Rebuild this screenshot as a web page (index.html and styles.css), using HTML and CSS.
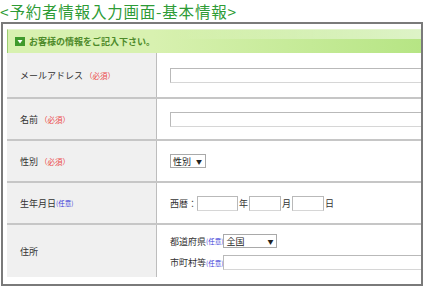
FILE: index.html
```html
<!DOCTYPE html>
<html lang="ja">
  <head>
    <meta charset="UTF-8" />
    <title>予約者情報入力画面-基本情報</title>
    <link rel="stylesheet" href="styles.css">
  </head>
  <body>
    <h1 class="page-title">&lt;予約者情報入力画面-基本情報&gt;</h1>

    <div class="form-frame">
      <div class="form-head">
        <svg class="head-icon" width="10" height="9" viewBox="0 0 10 9">
          <rect width="10" height="9" fill="#3f9a2c" />
          <path d="M2.5 3 L7.5 3 L5 6.5 Z" fill="#fff" />
        </svg>
        お客様の情報をご記入下さい。
      </div>

      <div class="form-table">
        <div class="row row-first">
          <div class="label">メールアドレス<span class="req">（必須）</span></div>
          <div class="field"><input class="text wide" type="text" /></div>
        </div>
        <div class="row">
          <div class="label">名前<span class="req">（必須）</span></div>
          <div class="field"><input class="text wide" type="text" /></div>
        </div>
        <div class="row">
          <div class="label">性別<span class="req">（必須）</span></div>
          <div class="field">
            <span class="select sex">性別<span class="arrow">▼</span></span>
          </div>
        </div>
        <div class="row">
          <div class="label">生年月日<span class="opt">(任意)</span></div>
          <div class="field birth">
            西暦：<input class="text year" type="text" />年<input class="text mon" type="text" />月<input class="text mon" type="text" />日
          </div>
        </div>
        <div class="row row-last">
          <div class="label">住所</div>
          <div class="field address">
            <div class="addr-line">
              都道府県<span class="opt">(任意)</span><span class="select pref">全国<span class="arrow">▼</span></span>
            </div>
            <div class="addr-line">
              市町村等<span class="opt">(任意)</span><input class="text wide" type="text" />
            </div>
          </div>
        </div>
      </div>
    </div>
  </body>
</html>
```

FILE: styles.css
```css
body {
  margin: 0;
  background: #fff;
  font-family: "Noto Sans CJK JP", "Liberation Sans", sans-serif;
  color: #333;
}

.page-title {
  margin: 0;
  height: 22px;
  font-size: 15.5px;
  line-height: 22px;
  font-weight: normal;
  letter-spacing: 0.8px;
  color: #2e9b36;
}

/* outer box */
.form-frame {
  margin-left: 1px;
  width: 414px;
  border: 2px solid #7a7a7a;
  padding: 5px 0 7px 4px;
  overflow: hidden;
}

.form-head {
  display: flex;
  align-items: center;
  gap: 4px;
  height: 23px;
  padding-left: 7px;
  border-left: 1px solid #9ccc72;
  border-top: 1px solid #e4f5cf;
  background:
    linear-gradient(to right, rgba(255, 255, 255, 0) 40%, rgba(255, 255, 255, 0.55)) top / 100% 9px no-repeat,
    linear-gradient(to right, #d8f1b0 35%, #b6e584);
  font-size: 9px;
  font-weight: bold;
  color: #4d8a2a;
  white-space: nowrap;
}

.head-icon {
  flex: none;
}

.form-table {
  width: 600px;
}

.row {
  display: flex;
  height: 40px;
  border-top: 2px solid #c6c6c6;
}

.row-first {
  height: 44px;
  border-top: none;
}

.row-last {
  height: 52px;
}

.label {
  width: 150px;
  flex: none;
  display: flex;
  align-items: center;
  padding-left: 13px;
  box-sizing: border-box;
  background: #f0f0f0;
  border-right: 1px solid #bdbdbd;
  font-size: 9px;
  white-space: nowrap;
}

.req {
  color: #ec4a4a;
  font-size: 7.5px;
  margin-left: 2px;
}

.opt {
  color: #3a3ad8;
  font-size: 6.5px;
}

.field {
  flex: 1;
  display: flex;
  align-items: center;
  padding-left: 13px;
  font-size: 9px;
  white-space: nowrap;
}

.text {
  box-sizing: border-box;
  height: 15px;
  margin: 0;
  padding: 0;
  border: 1px solid #b9b9b9;
  border-bottom-color: #d6d6d6;
  background: #fff;
}

.wide {
  width: 420px;
}

.year {
  width: 41px;
}

.mon {
  width: 32px;
  margin-left: 1px;
}

.birth .text {
  margin-right: 1px;
}

.select {
  display: inline-flex;
  align-items: center;
  justify-content: space-between;
  box-sizing: border-box;
  height: 14px;
  padding: 0 3px 0 2px;
  border: 1px solid #a9a9a9;
  background: #fff;
  font-size: 9px;
  color: #222;
}

.arrow {
  font-size: 6px;
}

.sex {
  width: 36px;
}

.pref {
  width: 54px;
}

.address {
  flex-direction: column;
  align-items: flex-start;
  justify-content: center;
  gap: 7px;
  padding-top: 2px;
}

.addr-line {
  display: flex;
  align-items: center;
}
```
